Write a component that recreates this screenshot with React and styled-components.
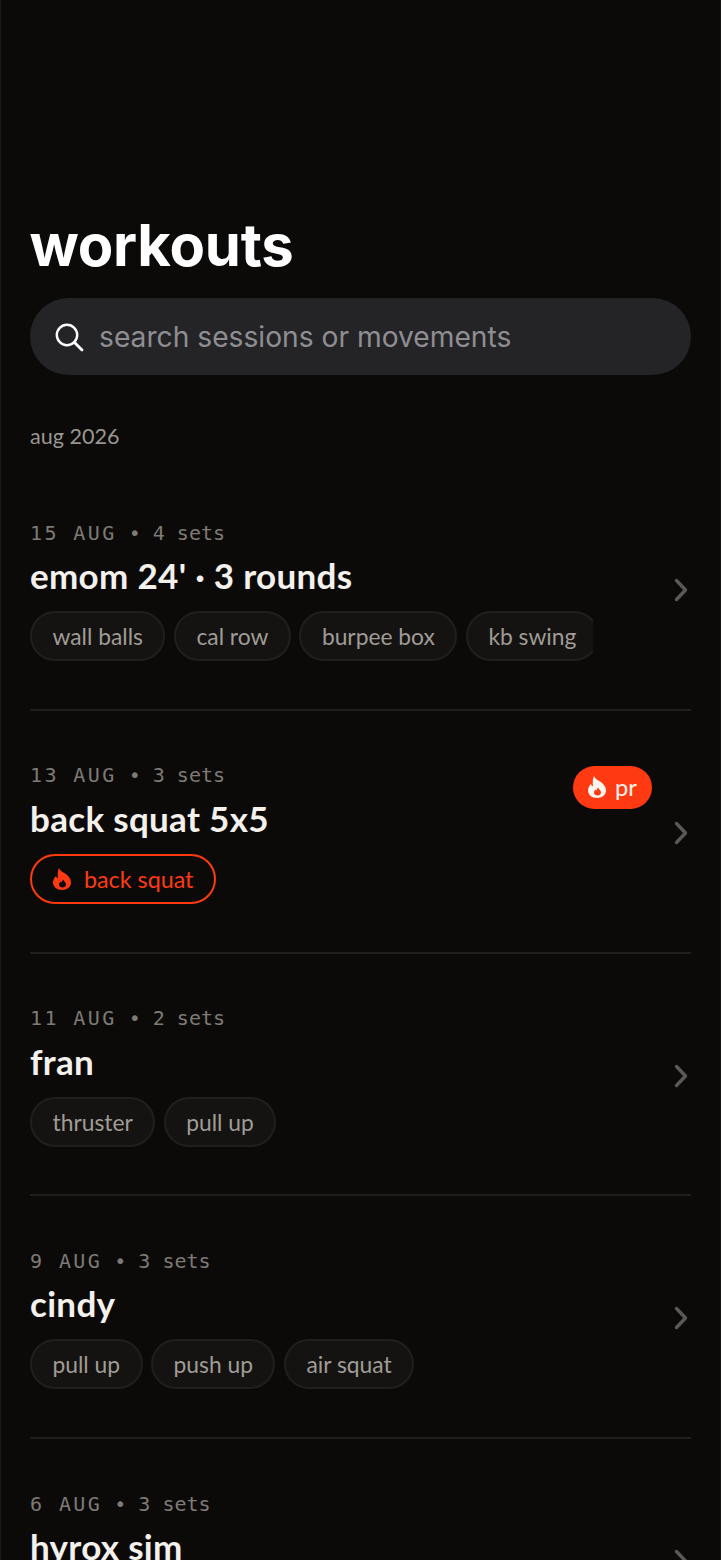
import React from "react";
import styled, { createGlobalStyle } from "styled-components";

const Global = createGlobalStyle`
  html, body { margin: 0; padding: 0; background: #0b0a09; height: 100%; overflow: hidden; }
  #root { height: 100%; }
`;

const Page = styled.main`
  box-sizing: border-box;
  width: 721px;
  height: 1560px;
  overflow: hidden;
  padding: 210px 30px 0;
  background: #0b0a09;
  border-left: 1px solid #1a1a19;
  border-right: 1px solid #151514;
`;
const Title = styled.h1`
  margin: 0 0 0 -1.5px;
  font: 700 58px/70px Inter, sans-serif;
  letter-spacing: -0.25px;
  color: #fff;
`;
const Search = styled.div`
  margin: 18px -1px 0 -1px;
  height: 77px;
  border-radius: 39px;
  background: #242427;
  display: flex;
  align-items: center;
  gap: 15px;
  padding-left: 24px;
`;
const SearchText = styled.span`
  font: 400 28.2px/34px Inter, sans-serif;
  color: #8e8e93;
`;
const Month = styled.div`
  margin: 47px 0 0 -1px;
  font: 400 21.6px/28px Lato, sans-serif;
  color: #9a9690;
`;
const List = styled.div`
  margin: 18px -1px 0 -1px;
`;
const Row = styled.article`
  position: relative;
  box-sizing: border-box;
  height: 242.8px;
  padding-top: 49.5px;
  border-bottom: 2px solid #1f1e1c;
`;
const Main = styled.div`
  width: 563px;
`;
const Meta = styled.div`
  font: 400 20px/30px "DejaVu Sans Mono", monospace;
  color: #7e7a75;
  white-space: pre;
`;
const MetaDate = styled.span`
  letter-spacing: 2.4px;
`;
const Name = styled.h2`
  margin: 5.500px 0 0;
  font: 700 35px/44px Lato, sans-serif;
  letter-spacing: 0.3px;
  color: #f4f1ec;
`;
const Chips = styled.div`
  margin-top: 14px;
  display: flex;
  gap: 8.500px;
  overflow: hidden;
`;
const Chip = styled.span`
  flex: none;
  box-sizing: border-box;
  height: 50px;
  display: inline-flex;
  align-items: center;
  gap: 13px;
  padding: 0 ${p => (p.$hot ? 21 : 20.5)}px;
  border-radius: 25px;
  font: 400 ${p => (p.$hot ? 23.3 : 22.8)}px/28px Lato, sans-serif;
  background: ${p => (p.$hot ? "transparent" : "#141311")};
  border: 2px solid ${p => (p.$hot ? "#ff3a12" : "#211f1d")};
  color: ${p => (p.$hot ? "#ff3a12" : "#a09c96")};
`;
const FlameSvg = styled.svg`
  flex: none;
  width: 18px;
  height: 22px;
  fill: currentColor;
`;
const Chevron = styled.svg`
  position: absolute;
  right: 3px;
  top: 110px;
  width: 14px;
  height: 24px;
`;
const Badge = styled.span`
  position: absolute;
  left: 543px;
  top: 55px;
  width: 79px;
  height: 43px;
  border-radius: 22px;
  background: #ff3a12;
  color: #fff3ee;
  font: 400 23.6px/28px Lato, sans-serif;
  display: flex;
  align-items: center;
  justify-content: center;
  gap: 9px;
`;

const Flame = () => (
  <FlameSvg viewBox="0 0 18 22" aria-hidden="true">
    <path
      fillRule="evenodd"
      d="M6 0C7 3 10 4 13 6C16 8.500 18 11 18 14.500C18 19 14 22 9 22C4 22 0 19 0 14.500C0 11.500 1.500 9.500 3 8C3.500 9.500 4 10 5 10.500C4.500 7 4.500 3 6 0ZM10 11.500C10.500 13 13 14 13 16.500C13 18.500 11.500 19.500 9.500 19.500C7.500 19.500 6 18.500 6 16.500C6 15 7 14 8 13.500C8.500 14 8.500 14.500 9 14.500C9 13.500 9.200 12.300 10 11.500Z"
    />
  </FlameSvg>
);

const Chev = () => (
  <Chevron viewBox="0 0 14 24" fill="none" aria-hidden="true">
    <path d="M2.500 2.500l9 9.500-9 9.500" stroke="#5a5957" strokeWidth="3.400" strokeLinecap="round" strokeLinejoin="round" />
  </Chevron>
);

const workouts = [
  { date: "15 AUG", sets: "4 sets", name: "emom 24' · 3 rounds", chips: ["wall balls", "cal row", "burpee box", "kb swing"] },
  { date: "13 AUG", sets: "3 sets", name: "back squat 5x5", pr: true, chips: ["back squat"] },
  { date: "11 AUG", sets: "2 sets", name: "fran", chips: ["thruster", "pull up"] },
  { date: "9 AUG", sets: "3 sets", name: "cindy", chips: ["pull up", "push up", "air squat"] },
  { date: "6 AUG", sets: "3 sets", name: "hyrox sim", chips: [] },
];

export default function App() {
  return (
    <Page>
      <Global />
      <Title>workouts</Title>
      <Search>
        <svg width="30" height="30" viewBox="0 0 30 30" fill="none" aria-hidden="true">
          <circle cx="13" cy="13" r="10.200" stroke="#fff" strokeWidth="2.400" />
          <path d="M20.500 20.500L28 28" stroke="#fff" strokeWidth="2.800" strokeLinecap="round" />
        </svg>
        <SearchText>search sessions or movements</SearchText>
      </Search>
      <Month>aug 2026</Month>
      <List>
        {workouts.map(w => (
          <Row key={w.date}>
            <Main>
              <Meta><MetaDate>{w.date}</MetaDate> • {w.sets}</Meta>
              <Name>{w.name}</Name>
              <Chips>
                {w.chips.map(c => (
                  <Chip key={c} $hot={w.pr}>
                    {w.pr && <Flame />}
                    {c}
                  </Chip>
                ))}
              </Chips>
            </Main>
            {w.pr && (
              <Badge>
                <Flame />
                pr
              </Badge>
            )}
            <Chev />
          </Row>
        ))}
      </List>
    </Page>
  );
}
